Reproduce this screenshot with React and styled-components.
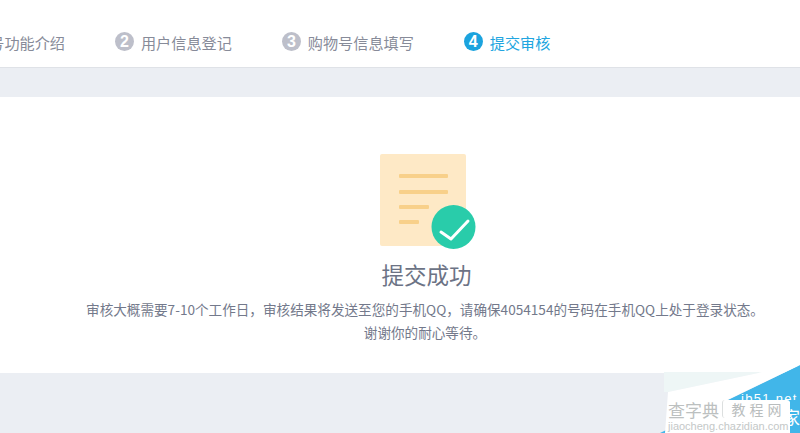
import styled, {createGlobalStyle} from "styled-components"

const Global = createGlobalStyle`
  html, body {
    margin: 0;
    padding: 0;
    background: #ebeef3;
    overflow: hidden;
  }
  body {
    font-family: "Noto Sans CJK SC", "Liberation Sans", sans-serif;
  }
`

const Page = styled.div`
  position: relative;
  width: 800px;
  height: 433px;
  overflow: hidden;
  background: #ebeef3;
`

const Header = styled.div`
  height: 51px;
  padding-top: 16px;
  background: #fff;
  border-bottom: 1px solid #dfe2e7;
  display: flex;
  align-items: center;
`

const Steps = styled.div`
  display: flex;
  align-items: center;
  gap: 50px;
  margin-left: -67px;
`

const Step = styled.div`
  display: flex;
  align-items: center;
  gap: 7px;
  flex: none;
  font-size: 15.15px;
  color: ${p => (p.active ? "#21a5e0" : "#878b99")};
`

const Num = styled.span`
  flex: none;
  width: 19px;
  height: 19px;
  border-radius: 50%;
  background: ${p => (p.active ? "#1ba3de" : "#bdbfca")};
  color: #fff;
  font-family: "Liberation Sans", sans-serif;
  font-size: 16px;
  font-weight: bold;
  line-height: 19px;
  text-align: center;
`

const Card = styled.div`
  margin-top: 29px;
  height: 276px;
  background: #fff;
  padding: 57px 0 0 50px;
  box-sizing: border-box;
  display: flex;
  flex-direction: column;
  align-items: center;
`

const Doc = styled.svg`
  display: block;
  width: 96px;
  height: 95px;
  margin-left: 6px;
`

const Title = styled.div`
  margin: 10px 0 0 3px;
  font-size: 22.5px;
  line-height: 30px;
  color: #6c7385;
`

const Desc = styled.div`
  margin-top: 9px;
  font-size: 13.6px;
  line-height: 23px;
  color: #73798b;
  text-align: center;
  white-space: nowrap;
`

// watermark stamped over the bottom right corner
const Mark = styled.div`
  position: absolute;
  right: 0;
  bottom: 0;
  isolation: isolate;
  width: 140px;
  height: 73px;
  padding-top: 33px;
  box-sizing: border-box;
  overflow: hidden;
  display: flex;
  flex-direction: column;
`

const MarkShape = styled.svg`
  position: absolute;
  inset: 0;
  z-index: -1;
  width: 140px;
  height: 73px;
`

const Site = styled.div`
  height: 9px;
  padding-left: 81px;
  overflow: hidden;
  font-family: "Liberation Sans", sans-serif;
  font-size: 13px;
  line-height: 11px;
  letter-spacing: 1.3px;
  white-space: nowrap;
  color: #fff;
`

const BrandRow = styled.div`
  display: flex;
  align-items: flex-start;
  height: 19px;
  padding-left: 8px;
`

const Brand = styled.span`
  flex: none;
  width: 54px;
  font-size: 17px;
  line-height: 20px;
  white-space: nowrap;
  color: #bcc0c0;
`

const BrandTag = styled.span`
  flex: none;
  width: 68px;
  height: 18px;
  box-sizing: border-box;
  border-left: 1px solid #dcdfdf;
  border-radius: 3px;
  background: #fff;
  font-size: 14px;
  line-height: 18px;
  letter-spacing: 4px;
  text-indent: 4px;
  text-align: center;
  color: #b9bdbd;
  white-space: nowrap;
`

const SiteName = styled.span`
  flex: none;
  width: 10px;
  height: 18px;
  margin-top: 8px;
  overflow: hidden;
  direction: rtl;
  font-size: 17px;
  line-height: 18px;
  color: #fff;
`

const BrandUrl = styled.div`
  padding-left: 8px;
  font-family: "Liberation Sans", sans-serif;
  font-size: 11px;
  line-height: 14px;
  white-space: nowrap;
  color: #c4c8c8;
`

const steps = [
  {n: "1", label: "购物号功能介绍"},
  {n: "2", label: "用户信息登记"},
  {n: "3", label: "购物号信息填写"},
  {n: "4", label: "提交审核", active: true},
]

export default function App() {
  return (
    <Page>
      <Global />
      <Header>
        <Steps>
          {steps.map(s => (
            <Step key={s.n} active={s.active}>
              <Num active={s.active}>{s.n}</Num>
              {s.label}
            </Step>
          ))}
        </Steps>
      </Header>
      <Card>
        <Doc viewBox="0 0 96 95">
          <rect x="0" y="0" width="86" height="92" rx="2" fill="#fee9c6" />
          <rect x="19" y="20" width="49" height="4" rx="1" fill="#f8d08a" />
          <rect x="19" y="36" width="49" height="4" rx="1" fill="#f8d08a" />
          <rect x="19" y="51" width="30" height="4" rx="1" fill="#f8d08a" />
          <rect x="19" y="66" width="20" height="4" rx="1" fill="#f8d08a" />
          <circle cx="73.5" cy="73" r="22" fill="#29ccaa" />
          <path d="M61 78 L71 85 L88 67" fill="none" stroke="#fff" strokeWidth="3" strokeLinecap="round" strokeLinejoin="round" />
        </Doc>
        <Title>提交成功</Title>
        <Desc>
          审核大概需要7-10个工作日，审核结果将发送至您的手机QQ，请确保4054154的号码在手机QQ上处于登录状态。
          <br />
          谢谢你的耐心等待。
        </Desc>
      </Card>
      <Mark>
        <MarkShape viewBox="0 0 140 73">
          <polygon points="4,12 103,12 8,32 4,32" fill="#eef6f6" />
          <polygon points="0,73 140,5 140,73" fill="#41b6e9" />
          <polygon points="8,32 103,12 140,5 63,42 130,42 130,73 5,73" fill="#fff" />
        </MarkShape>
        <Site>jb51.net</Site>
        <BrandRow>
          <Brand>查字典</Brand>
          <BrandTag>教程网</BrandTag>
          <SiteName>家</SiteName>
        </BrandRow>
        <BrandUrl>jiaocheng.chazidian.com</BrandUrl>
      </Mark>
    </Page>
  )
}
